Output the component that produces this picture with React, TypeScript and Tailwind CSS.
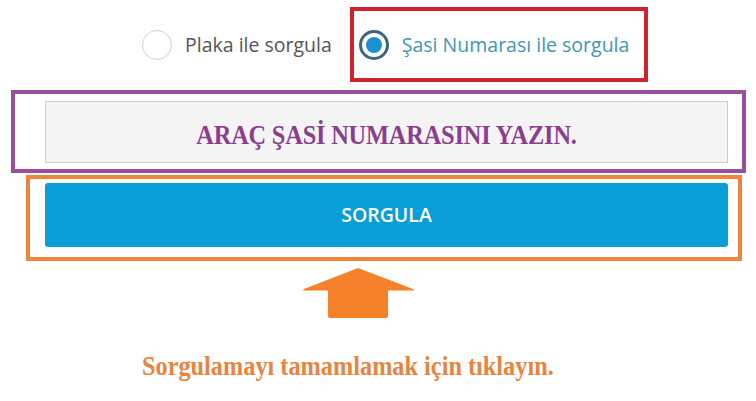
import React, { useState } from "react"

type Mode = "plaka" | "sasi"

function Radio({ checked }: { checked: boolean }) {
  if (checked) {
    return (
      <span className="flex h-[30px] w-[30px] shrink-0 items-center justify-center rounded-full border-[3px] border-[#3b6778] bg-white">
        <span className="h-[16px] w-[16px] rounded-full bg-[#1b91d2]" />
      </span>
    )
  }
  return <span className="block h-[30px] w-[30px] shrink-0 rounded-full border-[1.5px] border-[#d2d2d2] bg-white" />
}

function ArrowUp() {
  return (
    <svg width="113" height="51" viewBox="0 0 113 51" className="block">
      <path
        d="M56 1 L2 22 Q0 23 2 23.5 L26 23.5 L26 49 Q26 51 28 51 L84 51 Q86 51 86 49 L86 23.5 L111 23.5 Q113 23 111 22 Z"
        fill="#f5812a"
      />
    </svg>
  )
}

export default function App() {
  const [mode, setMode] = useState<Mode>("sasi")

  return (
    <div className="h-[401px] w-full overflow-hidden bg-white" style={{ fontFamily: '"Open Sans", "Noto Sans", sans-serif' }}>
      {/* Query type */}
      <div className="flex items-center pt-[7px]">
        <button onClick={() => setMode("plaka")} className="ml-[142px] flex items-center gap-[13px]">
          <Radio checked={mode === "plaka"} />
          <span className={`text-[19.5px] ${mode === "plaka" ? "text-[#3d98b5]" : "text-[#555555]"}`}>Plaka ile sorgula</span>
        </button>
        <div className="ml-[18px] flex h-[75px] items-center border-4 border-[#d3222f] pl-[5px] pr-[15px]">
          <button onClick={() => setMode("sasi")} className="flex items-center gap-[13px]">
            <Radio checked={mode === "sasi"} />
            <span className={`text-[19.5px] ${mode === "sasi" ? "text-[#3d98b5]" : "text-[#555555]"}`}>Şasi Numarası ile sorgula</span>
          </button>
        </div>
      </div>

      {/* Chassis number input */}
      <div className="ml-[11px] mt-[8px] flex h-[83px] w-[735px] items-start border-4 border-[#9a4f9c] pl-[30px] pr-[14px] pt-[7px]">
        <div className="flex h-[62px] w-full items-center justify-center border border-[#cccccc] bg-[#f4f4f4] pt-[6px]">
          <span
            className="inline-block scale-y-[1.15] text-[24.4px] font-bold leading-[24px] tracking-[-0.2px] text-[#8b3d8f]"
            style={{ fontFamily: '"Liberation Serif", "Times New Roman", serif' }}
          >
            ARAÇ ŞASİ NUMARASINI YAZIN.
          </span>
        </div>
      </div>

      {/* Submit */}
      <div className="ml-[26px] mt-[2px] h-[86px] w-[716px] border-4 border-[#f0843a] pb-[10px] pl-[15px] pr-[10px] pt-[4px]">
        <button className="flex h-full w-full items-center justify-center rounded-[3px] bg-[#0a9ed9] text-[19.5px] font-semibold text-white">
          SORGULA
        </button>
      </div>

      <div className="ml-[302px] mt-[6px]">
        <ArrowUp />
      </div>

      <p
        className="ml-[142px] mt-[37px] origin-bottom scale-y-[1.12] text-[24.3px] font-bold leading-[24px] text-[#e8843f]"
        style={{ fontFamily: '"Liberation Serif", "Times New Roman", serif' }}
      >
        Sorgulamayı tamamlamak için tıklayın.
      </p>
    </div>
  )
}
